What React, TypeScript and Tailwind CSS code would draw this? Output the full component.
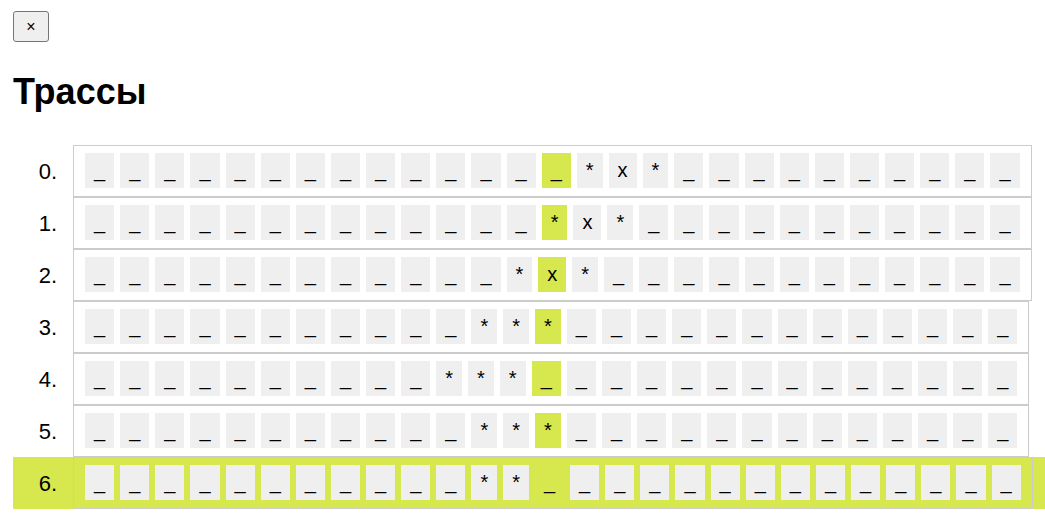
import React from 'react';

const traces = [
  '_'.repeat(13) + '_*x*' + '_'.repeat(10),
  '_'.repeat(13) + '*x*' + '_'.repeat(11),
  '_'.repeat(12) + '*x*' + '_'.repeat(12),
  '_'.repeat(11) + '***' + '_'.repeat(13),
  '_'.repeat(10) + '***_' + '_'.repeat(13),
  '_'.repeat(11) + '***' + '_'.repeat(13),
  '_'.repeat(11) + '**_' + '_'.repeat(13),
];

const head = 13;
const current = 6;

export default function App() {
  return (
    <div className="min-h-screen bg-white pt-[11px] pl-[13px] text-black" style={{ fontFamily: '"Liberation Sans", Arial, sans-serif' }}>
      <button className="w-[36px] h-[31px] flex items-center justify-center border border-[#767676] rounded-[3px] bg-[#efefef] text-[16px] leading-none">
        ×
      </button>

      <h1 className="mt-[29px] text-[36px] leading-[41px] font-bold">Трассы</h1>

      <div className="mt-[33px]">
        {traces.map((trace, i) => {
          const active = i === current;
          return (
            <div key={i} className={'flex items-stretch ' + (active ? 'bg-[#d6e84d]' : '')}>
              <div className="w-[60px] shrink-0 flex items-center justify-end pr-[16px] text-[22px]">{i}.</div>
              <div className="flex shrink-0 gap-[6px] border border-[#cccccc] px-[11px] pt-[7px] pb-[8px]">
                {trace.split('').map((ch, j) => {
                  let bg = 'bg-[#efefef]';
                  if (j === head) bg = active ? 'bg-transparent' : 'bg-[#d6e84d]';
                  return (
                    <span key={j} className={'h-[35px] px-[9px] py-[6px] text-[20px] leading-[23px] whitespace-pre ' + bg}>
                      {ch}
                    </span>
                  );
                })}
              </div>
            </div>
          );
        })}
      </div>
    </div>
  );
}
